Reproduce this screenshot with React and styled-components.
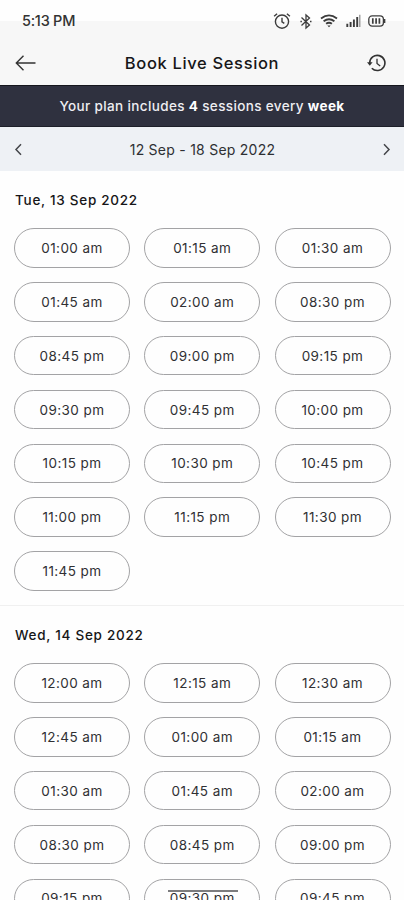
import React from "react";
import styled, { createGlobalStyle } from "styled-components";

const GlobalStyle = createGlobalStyle`
    * {
        box-sizing: border-box;
    }
    body {
        margin: 0;
        overflow: hidden;
        background: #fefefe;
        font-family: Inter, "Open Sans", sans-serif;
        color: #222226;
    }
`;

const Screen = styled.div`
    position: relative;
    width: 404px;
    height: 900px;
    overflow: hidden;
    background: #fefefe;
`;

const TopArea = styled.header`
    height: 85px;
    background: linear-gradient(#fefefe 21px, #f7f7f7 21px);
`;

const StatusBar = styled.div`
    display: flex;
    align-items: center;
    justify-content: space-between;
    height: 42px;
    padding: 0 18px 0 22px;
`;

const Clock = styled.span`
    font-size: 14.5px;
    font-weight: 500;
    line-height: 20px;
    letter-spacing: -0.25px;
    color: #333;
`;

const StatusIcons = styled.div`
    display: flex;
    align-items: center;
    svg {
        display: block;
    }
`;

const TitleBar = styled.div`
    display: flex;
    align-items: center;
    justify-content: space-between;
    height: 42px;
    padding: 0 18px 0 15px;
    svg {
        display: block;
    }
`;

const Title = styled.h1`
    margin: 0;
    font-size: 16.5px;
    font-weight: 500;
    letter-spacing: 0.65px;
    color: #161618;
`;

const PlanBanner = styled.div`
    display: flex;
    align-items: center;
    justify-content: center;
    height: 42px;
    border-top: 1px solid #15161d;
    border-bottom: 1px solid #1d1f29;
    background: #2f313f;
    color: #eeeef2;
    font-size: 13.5px;
    font-weight: 500;
    letter-spacing: 0.36px;
    white-space: pre;
    strong {
        font-weight: 700;
        color: #fff;
    }
`;

const WeekBar = styled.div`
    display: flex;
    align-items: center;
    justify-content: space-between;
    height: 44px;
    padding: 0 13px 0 14px;
    background: #eef1f5;
    svg {
        display: block;
    }
`;

const WeekLabel = styled.span`
    font-size: 14px;
    letter-spacing: 0.25px;
    color: #2d2f33;
`;

const Day = styled.section`
    height: 435px;
    padding: 19px 13px 0 14px;
    border-bottom: 1px solid #f0f0f0;
`;

const DayTitle = styled.h2`
    margin: 0 0 18.3px 1px;
    font-size: 13.5px;
    font-weight: 500;
    line-height: 20px;
    letter-spacing: 0.72px;
    color: #161618;
`;

const Slots = styled.div`
    display: grid;
    grid-template-columns: repeat(3, 116px);
    column-gap: 14.25px;
    row-gap: 14.33px;
`;

const Slot = styled.button`
    height: 39.5px;
    padding: 0;
    border: 1px solid #a3a3a5;
    border-radius: 20px;
    background: transparent;
    color: #303033;
    font-family: inherit;
    font-size: 13.5px;
    letter-spacing: 0.42px;
`;

const HomeIndicator = styled.div`
    position: absolute;
    left: 168px;
    top: 890px;
    width: 70px;
    height: 2px;
    background: #7c7c7e;
`;

const AlarmIcon = () => (
    <svg width="18" height="18" viewBox="0 0 18 18" fill="none" stroke="#3c3c3c" strokeWidth="1.4">
        <circle cx="9" cy="9.6" r="6.6" />
        <path d="M9 5.8v4l2.3 1.6M1.1 4.3l3-2.6M13.9 1.7l3 2.6" />
    </svg>
);

const BluetoothIcon = () => (
    <svg width="12" height="17" viewBox="0 0 12 17" fill="none" stroke="#3c3c3c" strokeWidth="1.3">
        <path d="M1.5 4.5l8 7.4L6 15V2l3.5 3.1-8 7.4" />
        <path d="M.4 8.5h1.5M10 8.5h1.5" />
    </svg>
);

const WifiIcon = () => (
    <svg width="18" height="14" viewBox="0 0 18 14" fill="none" stroke="#3c3c3c" strokeWidth="1.9">
        <path d="M1 4.4q8-6 16 0M3.6 7.3q5.4-4 10.8 0M6.1 9.8q2.9-2.1 5.8 0" />
        <path d="M7.3 11.4L9 13.2l1.7-1.8z" fill="#3c3c3c" stroke="none" />
    </svg>
);

const SignalIcon = () => (
    <svg width="15" height="14" viewBox="0 0 15 14" stroke="#3c3c3c" strokeWidth="1.9">
        <path d="M1.3 13V9.8M4.6 13V8M7.9 13V5.6M11.2 13V3" />
        <path d="M13.8 13V.8" stroke="#8a8a8a" strokeWidth="1.2" />
    </svg>
);

const BatteryIcon = () => (
    <svg width="18" height="12" viewBox="0 0 18 12" fill="none" stroke="#3c3c3c" strokeWidth="1.3">
        <rect x=".8" y=".9" width="14.6" height="10.2" rx="3.4" />
        <path d="M4.8 3.3v5.4M8.1 3.3v5.4M11.4 3.3v5.4" strokeWidth="1.7" />
        <path d="M16.6 4v4" strokeWidth="1.5" />
    </svg>
);

const BackIcon = () => (
    <svg width="22" height="18" viewBox="0 0 22 18" fill="none" stroke="#333" strokeWidth="1.4">
        <path d="M20.5 9H1.5M8.5 1.7L1.3 9l7.2 7.3" />
    </svg>
);

const HistoryIcon = () => (
    <svg width="19" height="18" viewBox="0 0 19 18" fill="none" stroke="#333" strokeWidth="1.6">
        <path d="M2.7 9A7.6 7.6 0 1 1 4.8 14.2" />
        <path d="M0 8.3h5.6L2.8 11.8z" fill="#333" stroke="none" />
        <path d="M10 4.8v4.6l3.2 2.6" strokeWidth="1.3" />
    </svg>
);

const Chevron = ({ right }) => (
    <svg width="9" height="13" viewBox="0 0 9 13" fill="none" stroke="#44464a" strokeWidth="1.5">
        <path d={right ? "M2 1.2l5 5.3-5 5.3" : "M7 1.2L2 6.5l5 5.3"} />
    </svg>
);

const Gap = styled.span`
    width: ${({ $w }) => $w}px;
`;

const days = [
    {
        title: "Tue, 13 Sep 2022",
        slots: [
            "01:00 am", "01:15 am", "01:30 am",
            "01:45 am", "02:00 am", "08:30 pm",
            "08:45 pm", "09:00 pm", "09:15 pm",
            "09:30 pm", "09:45 pm", "10:00 pm",
            "10:15 pm", "10:30 pm", "10:45 pm",
            "11:00 pm", "11:15 pm", "11:30 pm",
            "11:45 pm",
        ],
    },
    {
        title: "Wed, 14 Sep 2022",
        slots: [
            "12:00 am", "12:15 am", "12:30 am",
            "12:45 am", "01:00 am", "01:15 am",
            "01:30 am", "01:45 am", "02:00 am",
            "08:30 pm", "08:45 pm", "09:00 pm",
            "09:15 pm", "09:30 pm", "09:45 pm",
        ],
    },
];

const App = () => (
    <Screen>
        <GlobalStyle />
        <TopArea>
            <StatusBar>
                <Clock>5:13 PM</Clock>
                <StatusIcons>
                    <AlarmIcon />
                    <Gap $w={9} />
                    <BluetoothIcon />
                    <Gap $w={8} />
                    <WifiIcon />
                    <Gap $w={8} />
                    <SignalIcon />
                    <Gap $w={7} />
                    <BatteryIcon />
                </StatusIcons>
            </StatusBar>
            <TitleBar>
                <BackIcon />
                <Title>Book Live Session</Title>
                <HistoryIcon />
            </TitleBar>
        </TopArea>
        <PlanBanner>
            Your plan includes <strong>4</strong> sessions every <strong>week</strong>
        </PlanBanner>
        <WeekBar>
            <Chevron />
            <WeekLabel>12 Sep - 18 Sep 2022</WeekLabel>
            <Chevron right />
        </WeekBar>
        {days.map((day) => (
            <Day key={day.title}>
                <DayTitle>{day.title}</DayTitle>
                <Slots>
                    {day.slots.map((time) => (
                        <Slot key={time}>{time}</Slot>
                    ))}
                </Slots>
            </Day>
        ))}
        <HomeIndicator />
    </Screen>
);

export default App;
